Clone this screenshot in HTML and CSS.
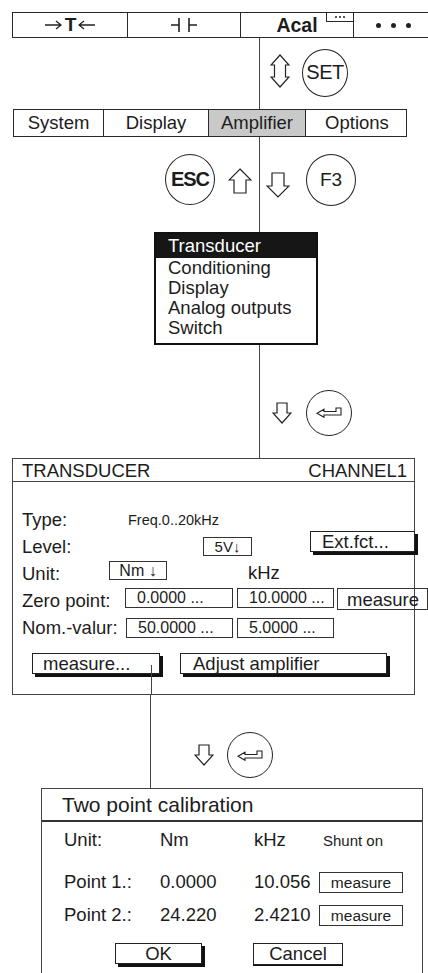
FILE: index.html
```html
<!DOCTYPE html>
<html>
<head>
<meta charset="utf-8">
<title>Amplifier menu</title>
<link rel="stylesheet" href="styles.css">
</head>
<body>
<div class="canvas">

  <div class="topbar">
    <div class="tcell tare">
      <svg class="harr" width="17" height="10" viewBox="0 0 17 10"><path d="M0 5H16M11 1L16 5L11 9" fill="none" stroke="#222" stroke-width="1.3"/></svg>
      <b>T</b>
      <svg class="harr" width="17" height="10" viewBox="0 0 17 10"><path d="M17 5H1M6 1L1 5L6 9" fill="none" stroke="#222" stroke-width="1.3"/></svg>
    </div>
    <div class="tcell">
      <svg class="capsym" width="26" height="14" viewBox="0 0 26 14"><path d="M0 7H8M8 0V14M18 0V14M18 7H26" fill="none" stroke="#222" stroke-width="1.6"/></svg>
    </div>
    <div class="tcell acal"><b>Acal</b><span class="badge"><i></i><i></i><i></i></span></div>
    <div class="tcell dots"><i></i><i></i><i></i></div>
  </div>

  <div class="link link1">
    <div class="vline"></div>
    <svg class="updown" width="20" height="34" viewBox="0 0 20 34"><path d="M10 1L19 11H15.5V23H19L10 33L1 23H4.5V11H1Z" fill="none" stroke="#222" stroke-width="1.2" stroke-linejoin="miter"/></svg>
    <div class="key key-set">SET</div>
  </div>

  <div class="tabs">
    <div class="tab">System</div>
    <div class="tab">Display</div>
    <div class="tab active">Amplifier</div>
    <div class="tab">Options</div>
  </div>

  <div class="link link2">
    <div class="key key-esc">ESC</div>
    <svg class="arrow-up" width="24" height="26" viewBox="0 0 24 26"><path d="M12 1L23 12H18V25H6V12H1Z" fill="none" stroke="#222" stroke-width="1.2"/></svg>
    <div class="vline"></div>
    <svg class="arrow-down" width="24" height="26" viewBox="0 0 24 26"><path d="M6 1H18V14H23L12 25L1 14H6Z" fill="none" stroke="#222" stroke-width="1.2"/></svg>
    <div class="key key-f3">F3</div>
  </div>

  <div class="menu">
    <div class="mi sel">Transducer</div>
    <div class="mi">Conditioning</div>
    <div class="mi">Display</div>
    <div class="mi">Analog outputs</div>
    <div class="mi">Switch</div>
  </div>

  <div class="link link3">
    <div class="vline"></div>
    <svg class="arrow-sm" width="20" height="22" viewBox="0 0 20 22"><path d="M5 1H15V11H19L10 21L1 11H5Z" fill="none" stroke="#222" stroke-width="1.2"/></svg>
    <div class="key key-enter"><svg width="26" height="11" viewBox="0 0 26 11"><path d="M1 6.3L8 2.3V4.5H20V1H25V8H8V10.3Z" fill="none" stroke="#222" stroke-width="1.1"/></svg></div>
  </div>

  <section class="panel">
    <div class="ph"><span>TRANSDUCER</span><span>CHANNEL1</span></div>
    <div class="pb">
      <div class="row row-type"><span class="lbl">Type:</span><span class="small">Freq.0..20kHz</span></div>
      <div class="row row-level"><span class="lbl">Level:</span><span class="fld fld-lv">5V↓</span><span class="btn btn-ext">Ext.fct...</span></div>
      <div class="row row-unit"><span class="lbl">Unit:</span><span class="fld fld-nm">Nm ↓</span><span class="khz">kHz</span></div>
      <div class="row row-zero"><span class="lbl">Zero point:</span><span class="fld fld-a">0.0000 ...</span><span class="fld fld-b">10.0000 ...</span><span class="fld fld-m">measure</span></div>
      <div class="row row-nom"><span class="lbl">Nom.-valur:</span><span class="fld fld-a2">50.0000 ...</span><span class="fld fld-b">5.0000 ...</span></div>
      <div class="btnrow"><span class="btn btn-meas">measure...</span><span class="btn btn-adj">Adjust amplifier</span></div>
      <div class="tail"><div class="vline"></div></div>
    </div>
  </section>

  <div class="link link4">
    <div class="vline"></div>
    <svg class="arrow-sm" width="20" height="22" viewBox="0 0 20 22"><path d="M5 1H15V11H19L10 21L1 11H5Z" fill="none" stroke="#222" stroke-width="1.2"/></svg>
    <div class="key key-enter"><svg width="26" height="11" viewBox="0 0 26 11"><path d="M1 6.3L8 2.3V4.5H20V1H25V8H8V10.3Z" fill="none" stroke="#222" stroke-width="1.1"/></svg></div>
  </div>

  <section class="dialog">
    <div class="dt">Two point calibration</div>
    <div class="db">
      <div class="drow drow-unit"><span>Unit:</span><span>Nm</span><span>kHz</span><span class="shunt">Shunt on</span></div>
      <div class="drow drow-p1"><span>Point 1.:</span><span>0.0000</span><span>10.056</span><span class="dbox">measure</span></div>
      <div class="drow drow-p2"><span>Point 2.:</span><span>24.220</span><span>2.4210</span><span class="dbox">measure</span></div>
      <div class="dbtns"><span class="btn btn-ok">OK</span><span class="btn btn-cancel">Cancel</span></div>
    </div>
  </section>

</div>
</body>
</html>
```

FILE: styles.css
```css
html, body {
  margin: 0;
  padding: 0;
  overflow: hidden;
  background: #fff;
}
body {
  width: 428px;
  height: 973px;
  font-family: "Liberation Sans", Arial, sans-serif;
  color: #1c1c1c;
}
.canvas {
  padding-top: 12px;
}

/* ---------- top bar ---------- */
.topbar {
  display: grid;
  grid-template-columns: 114px 113px 113px 80px;
  width: 420px;
  height: 26px;
  margin-left: 12px;
  border: 1px solid #2a2a2a;
  box-sizing: border-box;
}
.tcell {
  display: flex;
  align-items: center;
  justify-content: center;
  border-left: 1px solid #2a2a2a;
  font-size: 19px;
}
.tcell:first-child { border-left: none; }
.tare b { font-size: 19px; margin: 0 2px 0 3px; }
.harr { flex: none; }
.acal { position: relative; }
.acal b { font-size: 19.5px; }
.badge {
  position: absolute;
  top: -1px;
  right: -1px;
  width: 26px;
  height: 8px;
  border: 1px solid #2a2a2a;
  display: flex;
  align-items: center;
  justify-content: center;
  gap: 2px;
}
.badge i {
  width: 2px;
  height: 2px;
  background: #222;
  border-radius: 50%;
}
.dots { gap: 10px; }
.dots i {
  width: 5px;
  height: 5px;
  border-radius: 50%;
  background: #222;
}

/* ---------- connectors ---------- */
.link {
  display: flex;
  align-items: center;
}
.vline {
  width: 1px;
  align-self: stretch;
  background: #444;
}
.key {
  box-sizing: border-box;
  border: 1px solid #222;
  border-radius: 50%;
  display: flex;
  align-items: center;
  justify-content: center;
  flex: none;
}
.link1 {
  height: 71px;
  padding-left: 259px;
}
.link1 .updown { margin-left: 10px; margin-bottom: 6px; }
.key-set {
  width: 46px;
  height: 48px;
  margin-left: 12px;
  margin-bottom: 2px;
  font-size: 20px;
  letter-spacing: -0.5px;
}

.link2 {
  height: 95px;
  padding-left: 165px;
}
.key-esc {
  width: 50px;
  height: 51px;
  margin-bottom: 11px;
  font-size: 20px;
  font-weight: bold;
  letter-spacing: -1px;
}
.arrow-up { margin-left: 13px; margin-bottom: 8px; }
.link2 .vline { margin-left: 7px; }
.arrow-down { margin-left: 6px; }
.key-f3 {
  width: 50px;
  height: 52px;
  margin-left: 16px;
  margin-bottom: 10px;
  font-size: 19px;
}

.link3 {
  height: 113px;
  padding-left: 259px;
}
.link3 .arrow-sm { margin-left: 12px; margin-top: 22px; }
.key-enter {
  width: 46px;
  height: 46px;
}
.link3 .key-enter { margin-left: 14px; margin-top: 22px; }

.link4 {
  height: 93px;
  padding-left: 150px;
}
.link4 .arrow-sm { margin-left: 43px; margin-top: 27px; }
.link4 .key-enter { margin-left: 13px; margin-top: 27px; }

/* ---------- tabs ---------- */
.tabs {
  display: grid;
  grid-template-columns: 89px 105px 97px 103px;
  width: 394px;
  height: 28px;
  margin-left: 13px;
  border: 1px solid #2a2a2a;
  box-sizing: border-box;
}
.tab {
  display: flex;
  align-items: center;
  justify-content: center;
  border-left: 1px solid #2a2a2a;
  font-size: 18.5px;
}
.tab:first-child { border-left: none; }
.tab.active { background: #c9c9c9; }

/* ---------- dropdown menu ---------- */
.menu {
  width: 164px;
  margin-left: 154px;
  border: 2px solid #111;
  box-sizing: border-box;
  padding-bottom: 5px;
}
.mi {
  font-size: 18.5px;
  line-height: 20px;
  padding-left: 12px;
}
.mi.sel {
  background: #161616;
  color: #fff;
  line-height: 24px;
}

/* ---------- transducer panel ---------- */
.panel {
  width: 403px;
  margin-left: 12px;
  border: 1px solid #444;
  box-sizing: border-box;
}
.ph {
  display: flex;
  justify-content: space-between;
  height: 22px;
  line-height: 23px;
  padding: 0 7px 0 9px;
  border-bottom: 1px solid #444;
  font-size: 18.5px;
}
.pb {
  padding: 24px 0 0 9px;
}
.row {
  display: flex;
  align-items: center;
  height: 27px;
  font-size: 18.5px;
}
.lbl { flex: none; }
.row-type .lbl { width: 106px; }
.small { font-size: 14.5px; }
.row-level .lbl { width: 181px; }
.row-unit .lbl { width: 87px; }
.row-zero .lbl { width: 103px; }
.row-nom .lbl { width: 104px; }

.fld {
  box-sizing: border-box;
  height: 20px;
  border: 1px solid #333;
  font-size: 16px;
  line-height: 18px;
  padding-left: 11px;
  flex: none;
  white-space: nowrap;
}
.fld-lv {
  width: 49px;
  height: 19px;
  padding-left: 0;
  text-align: center;
  font-size: 15px;
}
.fld-nm {
  width: 58px;
  height: 19px;
  padding-left: 0;
  text-align: center;
  margin-bottom: 7px;
}
.khz { margin-left: 81px; margin-bottom: 2px; }
.fld-a { width: 108px; margin-bottom: 6px; }
.fld-a2 { width: 107px; }
.fld-b { width: 97px; margin-left: 4px; }
.row-zero .fld-b { margin-bottom: 6px; }
.fld-m {
  width: 91px;
  height: 22px;
  margin-left: 3px;
  padding-left: 9px;
  font-size: 18.5px;
  line-height: 21px;
  margin-bottom: 4px;
}

.btn {
  box-sizing: border-box;
  border: 1px solid #222;
  box-shadow: 3px 3px 0 #111;
  font-size: 18.5px;
  flex: none;
  white-space: nowrap;
}
.btn-ext {
  width: 105px;
  height: 21px;
  line-height: 19px;
  margin-left: 58px;
  padding-left: 11px;
  margin-bottom: 10px;
}
.btnrow {
  display: flex;
  margin-top: 12px;
  height: 23px;
}
.btn-meas {
  width: 128px;
  height: 21px;
  line-height: 20px;
  margin-left: 10px;
  padding-left: 10px;
}
.btn-adj {
  width: 207px;
  height: 21px;
  line-height: 20px;
  margin-left: 20px;
  padding-left: 12px;
}
.tail {
  display: flex;
  height: 29px;
  margin-top: -11px;
  padding-left: 129px;
}

/* ---------- calibration dialog ---------- */
.dialog {
  width: 382px;
  margin-left: 41px;
  border: 1px solid #444;
  border-bottom: none;
  box-sizing: border-box;
}
.dt {
  height: 31px;
  line-height: 32px;
  font-size: 21px;
  padding-left: 20px;
  border-bottom: 2px solid #333;
}
.db {
  padding: 6px 0 6px 22px;
}
.drow {
  display: grid;
  grid-template-columns: 96px 94px 65px 90px;
  align-items: center;
  height: 24px;
  font-size: 18.5px;
}
.shunt {
  font-size: 15px;
  padding-left: 4px;
}
.drow-p1 { margin-top: 18px; }
.drow-p2 { margin-top: 9px; }
.dbox {
  box-sizing: border-box;
  width: 84px;
  height: 21px;
  border: 1px solid #333;
  font-size: 15.5px;
  line-height: 19px;
  text-align: center;
}
.dbtns {
  display: flex;
  margin-top: 16px;
  height: 24px;
}
.btn-ok {
  width: 87px;
  height: 21px;
  line-height: 20px;
  margin-left: 51px;
  text-align: center;
}
.btn-cancel {
  width: 90px;
  height: 22px;
  line-height: 20px;
  margin-left: 51px;
  text-align: center;
  box-shadow: 0 1px 0 #111;
}
```
